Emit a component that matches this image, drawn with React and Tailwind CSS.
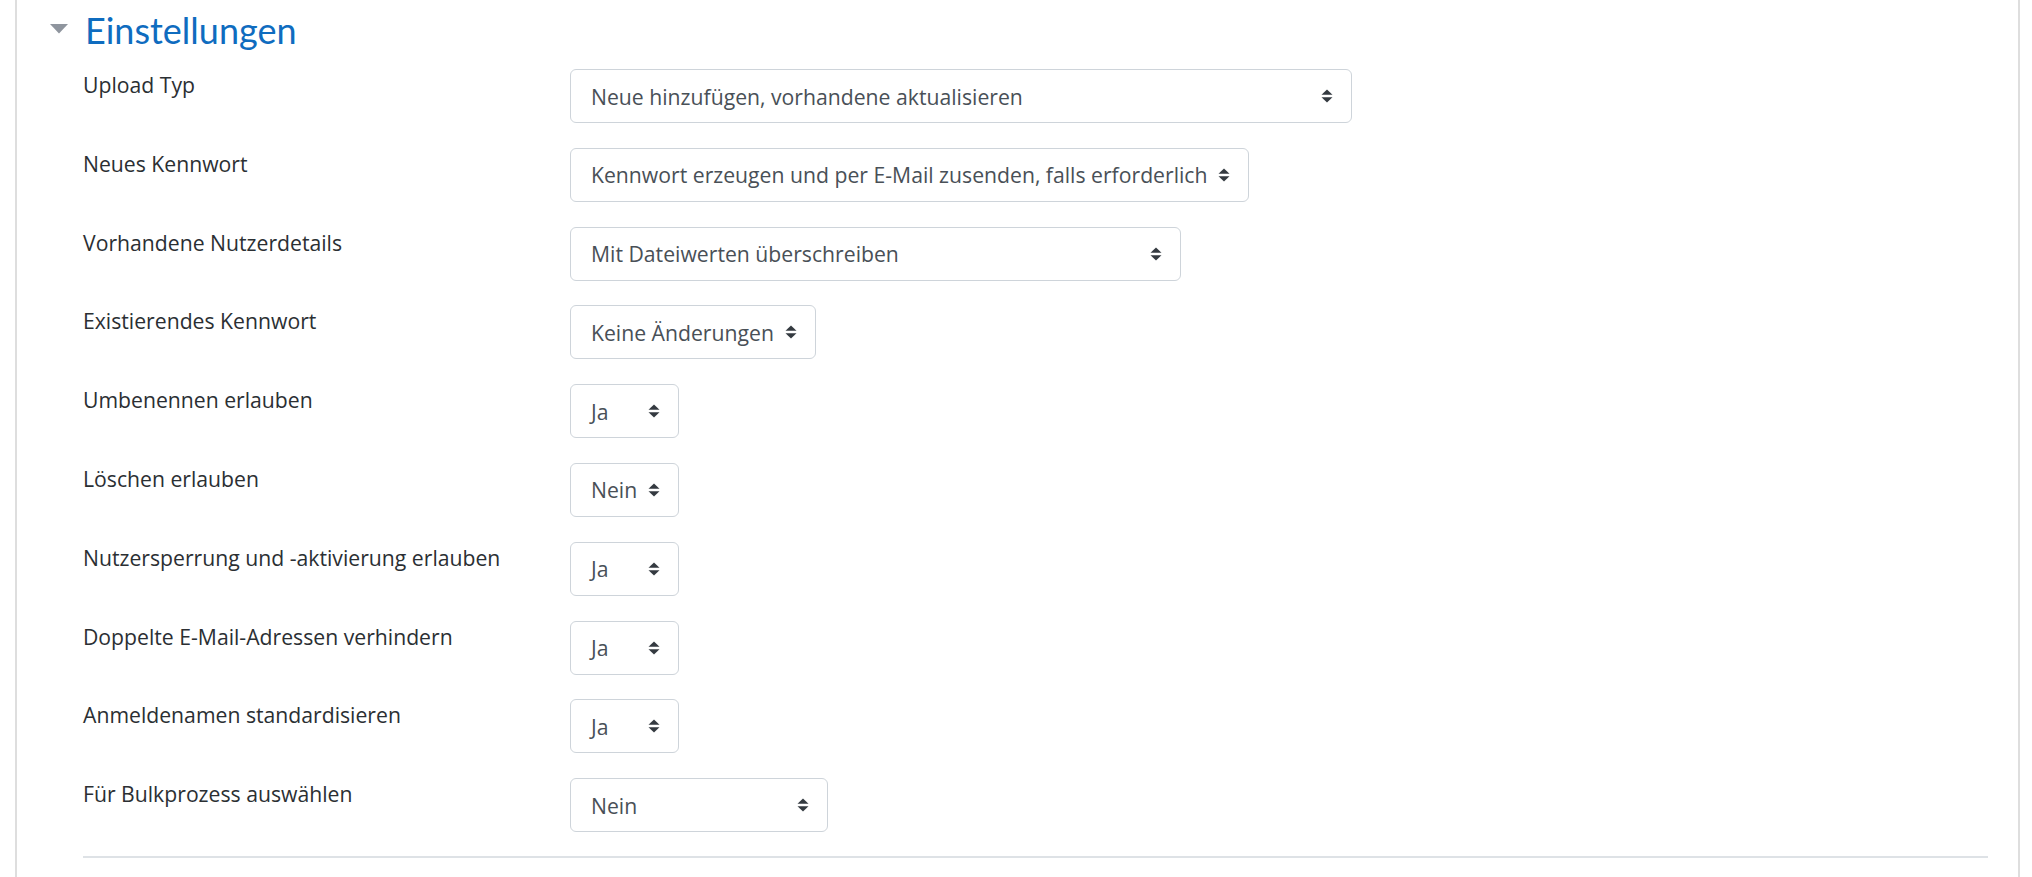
import React from 'react';

const rows = [
  { label: 'Upload Typ', value: 'Neue hinzufügen, vorhandene aktualisieren', width: 'w-[782px]' },
  { label: 'Neues Kennwort', value: 'Kennwort erzeugen und per E-Mail zusenden, falls erforderlich', width: 'w-[679px]' },
  { label: 'Vorhandene Nutzerdetails', value: 'Mit Dateiwerten überschreiben', width: 'w-[611px]' },
  { label: 'Existierendes Kennwort', value: 'Keine Änderungen', width: 'w-[246px]' },
  { label: 'Umbenennen erlauben', value: 'Ja', width: 'w-[109px]' },
  { label: 'Löschen erlauben', value: 'Nein', width: 'w-[109px]' },
  { label: 'Nutzersperrung und -aktivierung erlauben', value: 'Ja', width: 'w-[109px]' },
  { label: 'Doppelte E-Mail-Adressen verhindern', value: 'Ja', width: 'w-[109px]' },
  { label: 'Anmeldenamen standardisieren', value: 'Ja', width: 'w-[109px]' },
  { label: 'Für Bulkprozess auswählen', value: 'Nein', width: 'w-[258px]' },
];

function SortIcon() {
  return (
    <svg width="12" height="14" viewBox="0 0 12 14" className="shrink-0">
      <path d="M6 0.5 L11.5 5.8 H0.5 Z" fill="#343a40" />
      <path d="M0.5 8.2 H11.5 L6 13.5 Z" fill="#343a40" />
    </svg>
  );
}

function SelectBox({ value, width }) {
  return (
    <div
      className={`${width} h-[54px] flex items-center justify-between pl-[20px] pr-[18px] border-[1.5px] border-[#ced4da] rounded-[6px] bg-white text-[#495057] leading-[33px] whitespace-nowrap`}
    >
      <span>{value}</span>
      <SortIcon />
    </div>
  );
}

function App() {
  return (
    <div className="min-h-screen bg-white font-['Open_Sans',_'Liberation_Sans',_sans-serif] text-[21.2px]">
      <div className="ml-[15px] mr-[12px] border-x-2 border-[#dedede] min-h-[877px] pl-[33px] pr-[30px]">
        {/* Section header */}
        <div className="flex items-start pt-[9px]">
          <svg width="18" height="10" viewBox="0 0 18 10" className="mt-[15px] shrink-0">
            <path d="M0 0 H18 L9 9.5 Z" fill="#8f959e" />
          </svg>
          <h3 className="ml-[17px] font-['Lato',_sans-serif] text-[36px] leading-[43px] text-[#0f6cbf] font-normal">
            Einstellungen
          </h3>
        </div>

        {/* Form rows */}
        <div className="pl-[33px] pt-[17px]">
          {rows.map((row) => (
            <div key={row.label} className="flex mb-[24.8px]">
              <div className="w-[487px] shrink-0 text-[#2b2f33] leading-[33px] -mt-[1px]">{row.label}</div>
              <SelectBox value={row.value} width={row.width} />
            </div>
          ))}
          <div className="h-[2px] bg-[#dee2e6] -mt-[1px]" />
        </div>
      </div>
    </div>
  );
}

export default App;
